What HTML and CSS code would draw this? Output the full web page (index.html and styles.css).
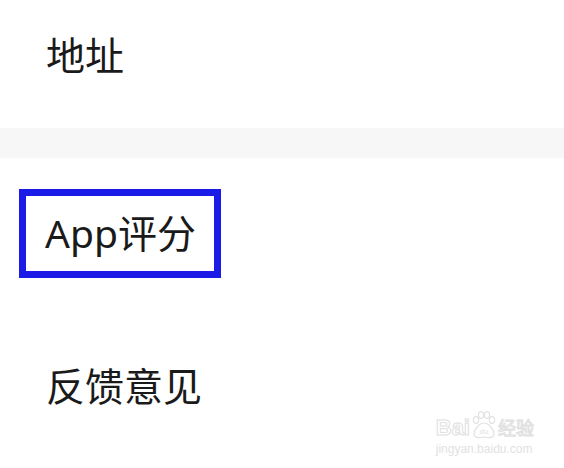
FILE: index.html
```html
<!DOCTYPE html>
<html lang="zh-CN">
<head>
    <meta charset="UTF-8">
    <meta name="viewport" content="width=device-width, initial-scale=1.0">
    <title>设置</title>
    <link rel="stylesheet" href="styles.css">
</head>
<body>
    <div class="page">
        <div class="row row-first">地址</div>
        <div class="divider"></div>
        <div class="row"><span class="highlight">App评分</span></div>
        <div class="row">反馈意见</div>

        <div class="watermark">
            <div class="wm-logo">
                <span class="wm-bai">Bai</span>
                <svg class="wm-paw" width="26" height="28" viewBox="0 0 26 28">
                    <ellipse cx="5" cy="9" rx="2.6" ry="3.4" fill="none" stroke="#e2e2e2" stroke-width="1.2"/>
                    <ellipse cx="10" cy="4" rx="2.6" ry="3.4" fill="none" stroke="#e2e2e2" stroke-width="1.2"/>
                    <ellipse cx="16" cy="4" rx="2.6" ry="3.4" fill="none" stroke="#e2e2e2" stroke-width="1.2"/>
                    <ellipse cx="21" cy="9" rx="2.6" ry="3.4" fill="none" stroke="#e2e2e2" stroke-width="1.2"/>
                    <path d="M13 12 C8 12 3 19 3 23 C3 27 8 27 13 26 C18 27 23 27 23 23 C23 19 18 12 13 12 Z" fill="none" stroke="#e2e2e2" stroke-width="1.2"/>
                    <text x="13" y="23" text-anchor="middle" font-size="8" font-family="Liberation Sans, sans-serif" fill="#e2e2e2">du</text>
                </svg>
                <span class="wm-jy">经验</span>
            </div>
            <div class="wm-url">jingyan.baidu.com</div>
        </div>
    </div>
</body>
</html>
```

FILE: styles.css
```css
* {
    box-sizing: border-box;
    margin: 0;
    padding: 0;
}

body {
    font-family: "Noto Sans", "Noto Sans CJK SC", sans-serif;
    background-color: #fff;
    color: #1a1a1a;
}

.page {
    position: relative;
    width: 564px;
    height: 468px;
    overflow: hidden;
}

.row {
    display: flex;
    align-items: center;
    height: 152px;
    padding-left: 46px;
    font-size: 39px;
    line-height: 48px;
}

.row-first {
    height: 128px;
    padding-bottom: 18px;
}

.divider {
    height: 30px;
    background-color: #f7f7f7;
}

.highlight {
    display: inline-block;
    margin-top: -2px;
    margin-left: -27px;
    padding: 13px 18px 14px 19px;
    border: 7px solid #1b1be8;
}

.watermark {
    position: absolute;
    right: 30px;
    bottom: 12px;
    color: #e4e4e4;
    font-family: "Liberation Sans", "Noto Sans CJK SC", sans-serif;
}

.wm-logo {
    display: flex;
    align-items: flex-end;
    gap: 1px;
}

.wm-bai {
    font-size: 22px;
    line-height: 22px;
    font-weight: bold;
    color: #fff;
    -webkit-text-stroke: 1px #e0e0e0;
}

.wm-jy {
    font-size: 18px;
    line-height: 20px;
    color: #fff;
    -webkit-text-stroke: 1px #e0e0e0;
}

.wm-url {
    font-size: 12px;
    line-height: 14px;
    margin-top: 3px;
    color: #e2e2e2;
}
```
